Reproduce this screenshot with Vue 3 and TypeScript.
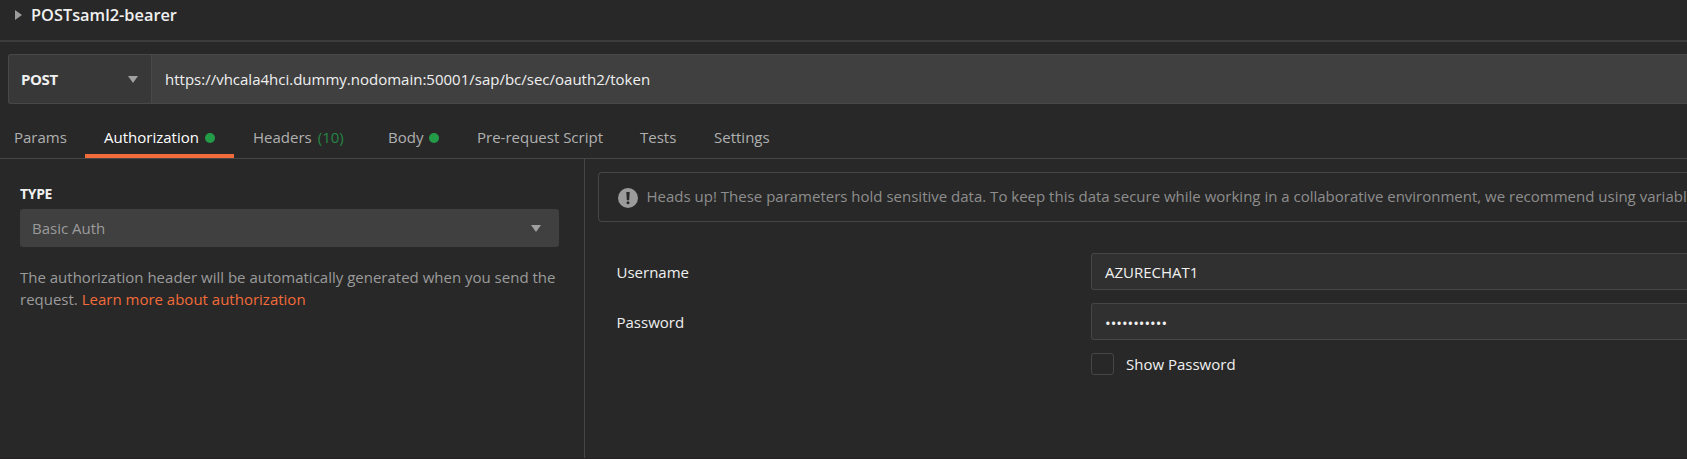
<script setup lang="ts">
interface Tab {
  key: string
  label: string
  count?: string
  dot?: boolean
  active?: boolean
}

const tabs: Tab[] = [
  { key: 'params', label: 'Params' },
  { key: 'authorization', label: 'Authorization', dot: true, active: true },
  { key: 'headers', label: 'Headers', count: '(10)' },
  { key: 'body', label: 'Body', dot: true },
  { key: 'script', label: 'Pre-request Script' },
  { key: 'tests', label: 'Tests' },
  { key: 'settings', label: 'Settings' },
]
</script>

<template>
  <main class="request">
    <header class="title-bar">
      <svg class="expand" width="7" height="10" viewBox="0 0 7 10"><path d="M0 0L7 5L0 10Z" fill="#9b9b9b" /></svg>
      <h1 class="title"><span>POSTsaml2-bearer</span></h1>
    </header>

    <section class="url-row">
      <div class="method">
        <span class="method-name">POST</span>
        <svg class="caret" width="10" height="7" viewBox="0 0 10 7"><path d="M0 0H10L5 7Z" fill="#a0a0a0" /></svg>
      </div>
      <div class="url"><span>https://vhcala4hci.dummy.nodomain:50001/sap/bc/sec/oauth2/token</span></div>
    </section>

    <nav class="tabs">
      <div v-for="tab in tabs" :key="tab.key" class="tab" :class="[tab.key, { active: tab.active }]">
        <span class="label">{{ tab.label }}</span>
        <span v-if="tab.count" class="count">{{ tab.count }}</span>
        <i v-if="tab.dot" class="dot"></i>
      </div>
    </nav>

    <div class="panes">
      <aside class="type-pane">
        <h2 class="type-title"><span>TYPE</span></h2>
        <div class="select">
          <span class="select-value">Basic Auth</span>
          <svg class="caret" width="10" height="7" viewBox="0 0 10 7"><path d="M0 0H10L5 7Z" fill="#a0a0a0" /></svg>
        </div>
        <p class="hint">
          <span class="line1">The authorization header will be automatically generated when you send the</span><br />
          <span class="line2">request. <a>Learn more about authorization</a></span>
        </p>
      </aside>

      <section class="form-pane">
        <div class="notice">
          <svg width="20" height="20" viewBox="0 0 20 20">
            <circle cx="10" cy="10" r="10" fill="#9b9b9b" />
            <path d="M8.3 4h3.4l-.5 8.2H8.8Z" fill="#282828" />
            <circle cx="10" cy="14.8" r="1.5" fill="#282828" />
          </svg>
          <span class="notice-text">Heads up! These parameters hold sensitive data. To keep this data secure while working in a collaborative environment, we recommend using variabl</span>
        </div>
        <div class="field">
          <div class="name"><span class="username">Username</span></div>
          <div class="input"><span class="user-value">AZURECHAT1</span></div>
        </div>
        <div class="field">
          <div class="name"><span class="password">Password</span></div>
          <div class="input masked"><span class="secret">•••••••••••</span></div>
        </div>
        <div class="show">
          <i class="checkbox"></i>
          <span class="show-label">Show Password</span>
        </div>
      </section>
    </div>
  </main>
</template>

<style>
body {
  background: #282828;
  overflow: hidden;
}
</style>

<style scoped>
.request {
  box-sizing: border-box;
  width: 1687px;
  height: 459px;
  overflow: hidden;
  display: flex;
  flex-direction: column;
  background: #282828;
  border-bottom: 1px solid #252021;
  color: #f0f0f0;
  font-family: "Open Sans", sans-serif;
  font-size: 15px;
  line-height: 22px;
  white-space: nowrap;
}
.request * { box-sizing: border-box; }
svg { display: block; flex: none; }
.title-bar {
  flex: none;
  height: 42px;
  display: flex;
  align-items: flex-start;
  padding-left: 15px;
  border-bottom: 2px solid #3c3c3c;
}
.expand { margin-top: 10px; }
.title {
  margin: 4px 0 0 9px;
  font-size: 16.35px;
  font-weight: 600;
  line-height: 22px;
}
.url-row {
  flex: none;
  display: flex;
  height: 50px;
  margin: 12px 0 0 8px;
  background: #404040;
  border: 1px solid #484848;
  border-right: 0;
  border-radius: 3px 0 0 3px;
}
.method {
  width: 143px;
  display: flex;
  align-items: center;
  justify-content: space-between;
  padding: 0 13px 0 12px;
  background: #383838;
  border-right: 1px solid #484848;
  border-radius: 3px 0 0 3px;
}
.method-name { font-weight: 700; letter-spacing: -0.4px; }
.url {
  display: flex;
  align-items: center;
  padding-left: 13px;
  font-weight: 500;
}
.tabs {
  flex: none;
  display: flex;
  height: 55px;
  border-bottom: 1px solid #464646;
  color: #b0b0b0;
}
.tab {
  display: flex;
  height: 54px;
  padding-top: 22px;
}
.tab.active {
  color: #fff;
  font-weight: 500;
  border-bottom: 4px solid #f26b3a;
}
.params { width: 85px; padding-left: 14px; }
.authorization { width: 149px; padding-left: 19px; }
.headers { width: 134px; padding-left: 19px; }
.body { width: 90px; padding-left: 20px; }
.script { width: 163px; padding-left: 19px; }
.tests { width: 73px; padding-left: 19px; }
.settings { padding-left: 20px; }
.label { flex: none; }
.count { margin-left: 6px; color: #268543; }
.dot {
  width: 10px;
  height: 10px;
  margin: 7px 0 0 6px;
  border-radius: 50%;
  background: #249c47;
}
.panes { flex: 1; display: flex; }
.type-pane {
  width: 585px;
  padding: 24px 25px 0 20px;
  border-right: 1px solid #464646;
}
.type-title {
  margin: 0;
  font-size: 14px;
  font-weight: 700;
  letter-spacing: -0.35px;
  line-height: 22px;
}
.select {
  display: flex;
  align-items: center;
  justify-content: space-between;
  height: 38px;
  margin-top: 4px;
  padding: 0 18px 0 12px;
  border-radius: 3px;
  background: #404040;
  color: #9b9b9b;
}
.hint { margin: 19px 0 0; color: #9b9b9b; }
.hint a { color: #f26b3a; }
.form-pane { flex: 1; min-width: 0; padding: 13px 0 0 13px; }
.notice {
  display: flex;
  align-items: center;
  height: 50px;
  padding-left: 19px;
  border: 1px solid #464646;
  border-right: 0;
  border-radius: 4px 0 0 4px;
  color: #8e8e8e;
  overflow: hidden;
}
.notice svg { margin-top: 2px; }
.notice-text { margin: -2px 0 0 8.5px; }
.field { display: flex; height: 37px; margin-top: 13px; font-weight: 500; }
.notice + .field { margin-top: 31px; }
.name { width: 493px; padding: 8px 0 0 18.5px; }
.input {
  flex: 1;
  padding: 7px 0 0 13px;
  border: 1px solid #464646;
  border-right: 0;
  border-radius: 3px 0 0 3px;
  background: #303030;
}
.input.masked { padding-top: 8px; }
.show {
  display: flex;
  height: 22px;
  margin: 13px 0 0 493px;
  font-weight: 500;
}
.checkbox { width: 23px; border: 1px solid #464646; border-radius: 3px; }
.show-label { margin-left: 12px; }
</style>
